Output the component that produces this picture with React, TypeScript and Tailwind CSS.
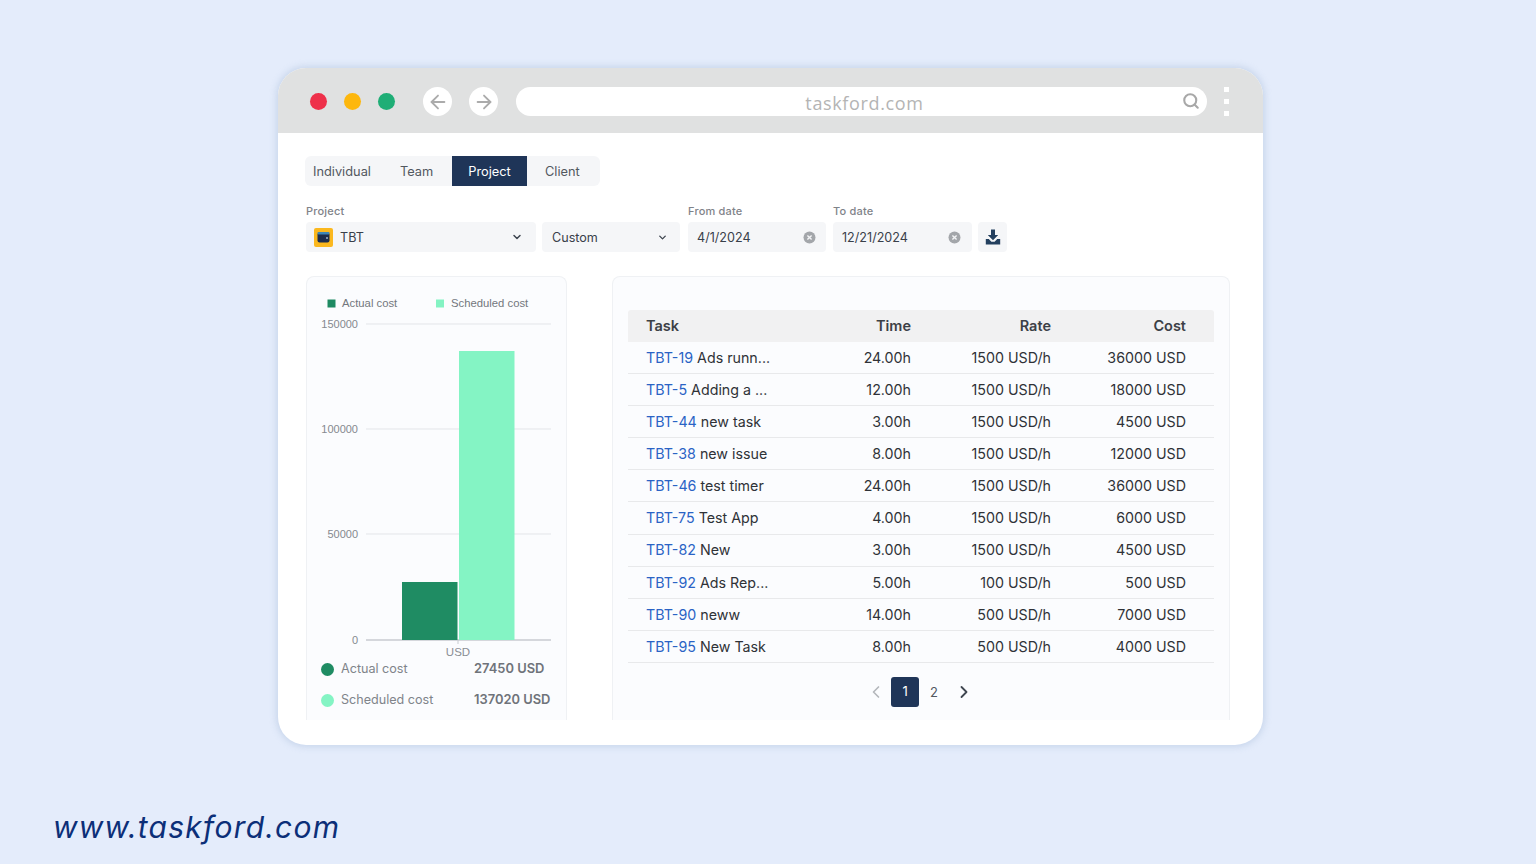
import React from "react";
import { ArrowLeft, ArrowRight, ChevronDown, ChevronLeft, ChevronRight, Search } from "lucide-react";

const rows = [
  ["TBT-19", "Ads runn...", "24.00h", "1500 USD/h", "36000 USD"],
  ["TBT-5", "Adding a ...", "12.00h", "1500 USD/h", "18000 USD"],
  ["TBT-44", "new task", "3.00h", "1500 USD/h", "4500 USD"],
  ["TBT-38", "new issue", "8.00h", "1500 USD/h", "12000 USD"],
  ["TBT-46", "test timer", "24.00h", "1500 USD/h", "36000 USD"],
  ["TBT-75", "Test App", "4.00h", "1500 USD/h", "6000 USD"],
  ["TBT-82", "New", "3.00h", "1500 USD/h", "4500 USD"],
  ["TBT-92", "Ads Rep...", "5.00h", "100 USD/h", "500 USD"],
  ["TBT-90", "neww", "14.00h", "500 USD/h", "7000 USD"],
  ["TBT-95", "New Task", "8.00h", "500 USD/h", "4000 USD"],
];

function ClearIcon() {
  return (
    <svg width="13" height="13" viewBox="0 0 13 13">
      <circle cx="6.5" cy="6.5" r="6" fill="#a3a6aa" />
      <path d="M4.4 4.4l4.2 4.2M8.6 4.4l-4.2 4.2" stroke="#f3f4f6" strokeWidth="1.4" />
    </svg>
  );
}

function Chart() {
  const ticks = [
    ["150000", 324],
    ["100000", 429],
    ["50000", 534],
    ["0", 640],
  ] as const;
  return (
    <svg width="261" height="381" viewBox="306 276 261 381" className="block" fontFamily="'Liberation Sans', sans-serif">
      <rect x="327.500" y="299.500" width="8" height="8" fill="#1e8a62" />
      <text x="342" y="307" fontSize="11.300" fill="#73777d">Actual cost</text>
      <rect x="436" y="299.500" width="8" height="8" fill="#84f3c3" />
      <text x="451" y="307" fontSize="11.300" fill="#73777d">Scheduled cost</text>
      {ticks.map(([t, y]) => (
        <g key={t}>
          <line x1="366" x2="551" y1={y} y2={y} stroke={t === "0" ? "#c8cbd0" : "#e3e5e9"} strokeWidth={t === "0" ? 1.4 : 1} />
          <text x="358" y={y + 3.5} textAnchor="end" fontSize="11" fill="#85898f">{t}</text>
        </g>
      ))}
      <rect x="402" y="582" width="55.500" height="58" fill="#1f8c63" />
      <rect x="459" y="351" width="55.500" height="289" fill="#84f4c4" />
      <line x1="458" x2="458" y1="640" y2="644" stroke="#c8cbd0" />
      <text x="458" y="656" textAnchor="middle" fontSize="11.500" fill="#8a8e94">USD</text>
    </svg>
  );
}

export default function App() {
  return (
    <div className="h-[864px] w-[1536px] overflow-hidden bg-[#e4ecfb] pt-[68px] font-['Inter',sans-serif]">
      <div className="ml-[278px] flex h-[677px] w-[985px] flex-col overflow-hidden rounded-[28px] bg-white shadow-[0_0_6px_2px_rgba(190,205,230,0.7)]">
        <div className="flex h-[65px] shrink-0 items-center bg-[#e0e1e1] pl-[32px] pt-[2px]">
          <span className="h-[17px] w-[17px] rounded-full bg-[#ee304a]" />
          <span className="ml-[17px] h-[17px] w-[17px] rounded-full bg-[#fdb70d]" />
          <span className="ml-[17px] h-[17px] w-[17px] rounded-full bg-[#1fae76]" />
          <span className="ml-[28px] flex h-[29px] w-[29px] items-center justify-center rounded-full bg-white text-[#ababab]"><ArrowLeft size={22} strokeWidth={2} /></span>
          <span className="ml-[17px] flex h-[29px] w-[29px] items-center justify-center rounded-full bg-white text-[#ababab]"><ArrowRight size={22} strokeWidth={2} /></span>
          <div className="relative ml-[18px] flex h-[29px] w-[691px] items-center justify-center rounded-full bg-white">
            <span className="ml-[6px] pt-[3px] font-['Open_Sans',sans-serif] text-[18px] tracking-[0.65px] text-[#b4b4b4]">taskford.com</span>
            <Search size={18} strokeWidth={2.8} className="absolute right-[7px] top-[5px] text-[#a8a8a8]" />
          </div>
          <div className="ml-[17px] flex h-[29px] flex-col justify-between">
            <span className="h-[5px] w-[5px] bg-white" />
            <span className="h-[5px] w-[5px] bg-white" />
            <span className="h-[5px] w-[5px] bg-white" />
          </div>
        </div>

        <div className="flex min-h-0 flex-1 flex-col pl-[28px] pt-[23px]">
          <div className="-ml-px flex h-[30px] w-[295px] items-center rounded-[6px] bg-[#f5f6f8] pt-[1px] text-[12.800px] text-[#52585f]">
            <span className="w-[74px] pl-[8px]">Individual</span>
            <span className="w-[73px] pl-[21px]">Team</span>
            <span className="-mt-px flex h-[30px] w-[75px] items-center justify-center bg-[#1f3558] pt-[1px] text-white">Project</span>
            <span className="pl-[18px]">Client</span>
          </div>

          <div className="mt-[19px] flex items-end text-[12.600px] text-[#39404a]">
            <div className="w-[230px]">
              <div className="mb-[4px] text-[11px] font-medium leading-[13px] tracking-[0.2px] text-[#7f8389]">Project</div>
              <div className="flex h-[30px] items-center rounded-[4px] bg-[#f5f6f8] pl-[9px] pr-[13px]">
                <svg width="19" height="19" viewBox="0 0 19 19" className="-ml-px">
                  <rect width="19" height="19" rx="2" fill="#fbb81e" />
                  <rect x="3.500" y="4.500" width="12" height="10" rx="2" fill="#1c2d4d" />
                  <rect x="3.500" y="4" width="12" height="2.500" rx="1" fill="#3d86b8" />
                  <circle cx="13" cy="10" r="1" fill="#9fb4cf" />
                </svg>
                <span className="ml-[7px] flex-1 pt-[2px]">TBT</span>
                <ChevronDown size={12} strokeWidth={3} className="text-[#3f4650]" />
              </div>
            </div>
            <div className="ml-[6px] flex h-[30px] w-[138px] items-center rounded-[4px] bg-[#f5f6f8] pl-[10px] pr-[12px]">
              <span className="flex-1 pt-[2px]">Custom</span>
              <ChevronDown size={11} strokeWidth={3} className="text-[#3f4650]" />
            </div>
            <div className="ml-[8px] w-[138px]">
              <div className="mb-[4px] text-[11px] font-medium leading-[13px] tracking-[0.2px] text-[#7f8389]">From date</div>
              <div className="flex h-[30px] items-center rounded-[4px] bg-[#f5f6f8] pl-[9px] pr-[10px]">
                <span className="flex-1 pt-[2px]">4/1/2024</span>
                <ClearIcon />
              </div>
            </div>
            <div className="ml-[7px] w-[139px]">
              <div className="mb-[4px] text-[11px] font-medium leading-[13px] tracking-[0.2px] text-[#7f8389]">To date</div>
              <div className="flex h-[30px] items-center rounded-[4px] bg-[#f5f6f8] pl-[9px] pr-[11px]">
                <span className="flex-1 pt-[2px]">12/21/2024</span>
                <ClearIcon />
              </div>
            </div>
            <div className="ml-[6px] flex h-[30px] w-[29px] items-center justify-center rounded-[4px] bg-[#f5f6f8]">
              <svg width="16" height="16" viewBox="0 0 16 16" fill="#24405f">
                <path d="M6 0.500h4v5.500h3.200L8 11.200 2.800 6H6z" />
                <path d="M0.800 10h3l2.600 2.800h3.200L12.200 10h3v5.500H0.800z" />
              </svg>
            </div>
          </div>

          <div className="mt-[24px] flex min-h-0 flex-1 items-start">
            <div className="h-[444px] w-[261px] overflow-hidden rounded-t-[8px] border border-b-0 border-[#eff1f4] bg-[#fbfcfe]">
              <div className="-m-px">
                <Chart />
                <div className="mt-[2px] flex items-center pl-[15px] text-[12.600px] leading-[20px]">
                  <span className="h-[13px] w-[13px] rounded-full bg-[#1f8c63]" />
                  <span className="ml-[7px] w-[133px] text-[#80848a]">Actual cost</span>
                  <span className="text-[12.900px] font-semibold text-[#6f737a]">27450 USD</span>
                </div>
                <div className="mt-[11px] flex items-center pl-[15px] text-[12.600px] leading-[20px]">
                  <span className="h-[13px] w-[13px] rounded-full bg-[#84f4c4]" />
                  <span className="ml-[7px] w-[133px] text-[#80848a]">Scheduled cost</span>
                  <span className="text-[12.900px] font-semibold text-[#6f737a]">137020 USD</span>
                </div>
              </div>
            </div>

            <div className="ml-[45px] h-[444px] w-[618px] rounded-t-[8px] border border-b-0 border-[#eff1f4] bg-[#fbfcfe] px-[15px] pt-[33px]">
              <div className="flex h-[32px] items-center rounded-t-[3px] bg-[#f1f1f2] pl-[18px] text-[14.500px] font-semibold text-[#3c4046]">
                <span className="flex-1">Task</span>
                <span className="w-[100px] text-right">Time</span>
                <span className="w-[140px] text-right">Rate</span>
                <span className="w-[135px] text-right">Cost</span>
                <span className="w-[28px]" />
              </div>
              {rows.map((r) => (
                <div key={r[0]} className="flex h-[32.100px] items-center border-b border-[#e8e9eb] pl-[18px] text-[14.250px] text-[#2f3237]">
                  <span className="flex-1 whitespace-nowrap"><span className="text-[#2a63c5]">{r[0]}</span> {r[1]}</span>
                  <span className="w-[100px] text-right">{r[2]}</span>
                  <span className="w-[140px] text-right">{r[3]}</span>
                  <span className="w-[135px] text-right">{r[4]}</span>
                  <span className="w-[28px]" />
                </div>
              ))}
              <div className="mt-[14px] flex items-center justify-center pr-[2px] text-[13px] text-[#52585f]">
                <ChevronLeft size={20} strokeWidth={2} className="text-[#b4b7bb]" />
                <span className="ml-[5px] flex h-[30px] w-[28px] items-center justify-center rounded-[3px] bg-[#1f3558] text-white">1</span>
                <span className="ml-[11px] pt-[2px]">2</span>
                <ChevronRight size={20} strokeWidth={2.2} className="ml-[16px] text-[#3f4650]" />
              </div>
            </div>
          </div>
        </div>
      </div>
      <div className="ml-[53px] mt-[62px] text-[30px] italic leading-[40px] tracking-[1.2px] text-[#0c2f78]">www.taskford.com</div>
    </div>
  );
}
